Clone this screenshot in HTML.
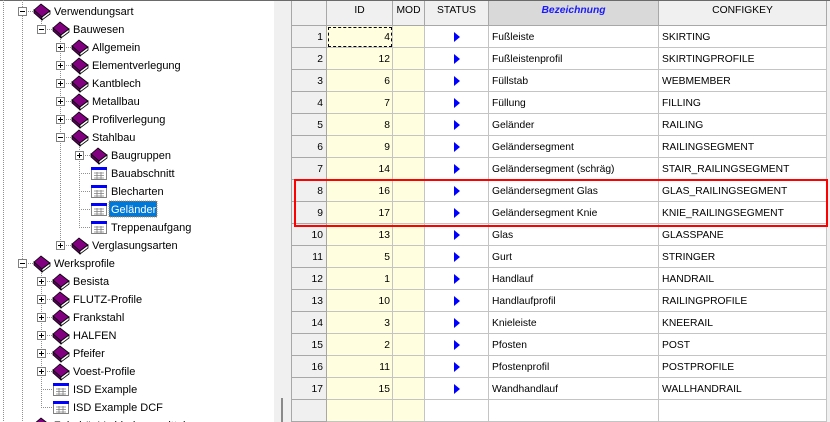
<!DOCTYPE html>
<html><head><meta charset="utf-8"><style>
*{margin:0;padding:0;box-sizing:border-box}
body{width:830px;height:422px;overflow:hidden;background:#fff;position:relative;font-family:"Liberation Sans",Arial,sans-serif}
#top{position:absolute;left:0;top:0;width:830px;height:1px;background:#6a6a6a}
#sb{position:absolute;left:274px;top:1px;width:17px;height:421px;background:#f0f0f0}
#thumb{position:absolute;left:281px;top:398px;width:2px;height:24px;background:#8a8a8a}
#grid{position:absolute;left:291px;top:1px;width:536px;border-collapse:separate;border-spacing:0;table-layout:fixed;font-size:10.3px;color:#000;border-left:1px solid #a8a8a8}
#grid td{border-right:1px solid #c4c4c4;border-bottom:1px solid #c4c4c4;height:22px;padding:1px 3px 0;white-space:nowrap;overflow:hidden}
#grid tr.h td{height:24px;background:#f0f0f0;text-align:center;vertical-align:top;padding-top:4px;border-color:#a8a8a8}
#grid tr.h td.bz{background:#d9d9d9;color:#1a1aff;font-weight:bold;font-style:italic}
#grid td.rh{background:#f0f0f0;text-align:right;padding-right:3px;border-color:#a8a8a8}
#grid td.y{background:#ffffe0;text-align:right;padding-right:2px}
#grid td.st{text-align:center}
.ar{display:inline-block;width:0;height:0;border-left:6px solid #0000ff;border-top:5px solid transparent;border-bottom:5px solid transparent;vertical-align:middle}
#red{position:absolute;left:294px;top:179px;width:534px;height:48px;border:2px solid #f00}
#right{position:absolute;left:827px;top:1px;width:3px;height:421px;background:#f0f0f0}
</style></head><body>
<div id="top"></div>
<svg width="274" height="422" style="position:absolute;left:0;top:0;font-family:'Liberation Sans',Arial,sans-serif;font-size:11px">
<defs>
<g id="bk"><polygon points="1,7 8,1 17,8 9,14" fill="#800080" stroke="#000" stroke-width="0.8"/><polygon points="1,7 9,14 9,17 1,10" fill="#5a005a" stroke="#000" stroke-width="0.8"/><polygon points="9,14 17,8 17,11 9,17" fill="#fff" stroke="#000" stroke-width="0.8"/></g>
<g id="tb"><rect x="0.5" y="0.5" width="15" height="12" fill="#fff" stroke="#808080"/><rect x="0" y="0" width="16" height="3" fill="#0000ff"/><path d="M3 6h10M3 8.5h10M3 11h10M6 5v7M10 5v7" stroke="#808080" stroke-width="0.8"/></g>
<g id="pl"><rect x="0.5" y="0.5" width="8" height="8" fill="#fff" stroke="#808080"/><path d="M2 4.5h5M4.5 2v5" stroke="#000"/></g>
<g id="mi"><rect x="0.5" y="0.5" width="8" height="8" fill="#fff" stroke="#808080"/><path d="M2 4.5h5" stroke="#000"/></g>
</defs>
<g stroke="#909090" stroke-dasharray="1,1" fill="none">
<path d="M3.5 0V422M22.5 0V422M41.5 11V29M41.5 263V407M60.5 29V245M79.5 137V227"/>
<path d="M22 11.5h11M41 29.5h11M60 47.5h11M60 65.5h11M60 83.5h11M60 101.5h11M60 119.5h11M60 137.5h11M79 155.5h11M79 173.5h11M79 191.5h11M79 209.5h11M79 227.5h11M60 245.5h11M22 263.5h11M41 281.5h11M41 299.5h11M41 317.5h11M41 335.5h11M41 353.5h11M41 371.5h11M41 389.5h11M41 407.5h11"/>
</g>
<use href="#mi" x="18" y="7"/><use href="#bk" x="33" y="3"/><text x="54" y="15">Verwendungsart</text>
<use href="#mi" x="37" y="25"/><use href="#bk" x="52" y="21"/><text x="73" y="33">Bauwesen</text>
<use href="#pl" x="56" y="43"/><use href="#bk" x="71" y="39"/><text x="92" y="51">Allgemein</text>
<use href="#pl" x="56" y="61"/><use href="#bk" x="71" y="57"/><text x="92" y="69">Elementverlegung</text>
<use href="#pl" x="56" y="79"/><use href="#bk" x="71" y="75"/><text x="92" y="87">Kantblech</text>
<use href="#pl" x="56" y="97"/><use href="#bk" x="71" y="93"/><text x="92" y="105">Metallbau</text>
<use href="#pl" x="56" y="115"/><use href="#bk" x="71" y="111"/><text x="92" y="123">Profilverlegung</text>
<use href="#mi" x="56" y="133"/><use href="#bk" x="71" y="129"/><text x="92" y="141">Stahlbau</text>
<use href="#pl" x="75" y="151"/><use href="#bk" x="90" y="147"/><text x="111" y="159">Baugruppen</text>
<use href="#tb" x="91" y="167"/><text x="111" y="177">Bauabschnitt</text>
<use href="#tb" x="91" y="185"/><text x="111" y="195">Blecharten</text>
<use href="#tb" x="91" y="203"/><rect x="109" y="201" width="48" height="16" fill="#0078d7" stroke="#e08030" stroke-dasharray="1,1"/><text x="111" y="213" fill="#fff">Geländer</text>
<use href="#tb" x="91" y="221"/><text x="111" y="231">Treppenaufgang</text>
<use href="#pl" x="56" y="241"/><use href="#bk" x="71" y="237"/><text x="92" y="249">Verglasungsarten</text>
<use href="#mi" x="18" y="259"/><use href="#bk" x="33" y="255"/><text x="54" y="267">Werksprofile</text>
<use href="#pl" x="37" y="277"/><use href="#bk" x="52" y="273"/><text x="73" y="285">Besista</text>
<use href="#pl" x="37" y="295"/><use href="#bk" x="52" y="291"/><text x="73" y="303">FLUTZ-Profile</text>
<use href="#pl" x="37" y="313"/><use href="#bk" x="52" y="309"/><text x="73" y="321">Frankstahl</text>
<use href="#pl" x="37" y="331"/><use href="#bk" x="52" y="327"/><text x="73" y="339">HALFEN</text>
<use href="#pl" x="37" y="349"/><use href="#bk" x="52" y="345"/><text x="73" y="357">Pfeifer</text>
<use href="#pl" x="37" y="367"/><use href="#bk" x="52" y="363"/><text x="73" y="375">Voest-Profile</text>
<use href="#tb" x="53" y="383"/><text x="73" y="393">ISD Example</text>
<use href="#tb" x="53" y="401"/><text x="73" y="411">ISD Example DCF</text>
<use href="#bk" x="33" y="417"/><text x="54" y="429">Zubehör Verbindungsmittel</text>
</svg>
<div id="sb"></div><div id="thumb"></div>
<table id="grid">
<colgroup><col style="width:35px"><col style="width:66px"><col style="width:32px"><col style="width:64px"><col style="width:170px"><col style="width:168px"></colgroup>
<tr class="h"><td style="height:25px"></td><td style="height:25px">ID</td><td>MOD</td><td>STATUS</td><td class="bz">Bezeichnung</td><td>CONFIGKEY</td></tr>
<tr><td class="rh">1</td><td class="y" style="outline:1px dashed #000;outline-offset:-2px">4</td><td class="y"></td><td class="st"><span class="ar"></span></td><td>Fußleiste</td><td>SKIRTING</td></tr>
<tr><td class="rh">2</td><td class="y">12</td><td class="y"></td><td class="st"><span class="ar"></span></td><td>Fußleistenprofil</td><td>SKIRTINGPROFILE</td></tr>
<tr><td class="rh">3</td><td class="y">6</td><td class="y"></td><td class="st"><span class="ar"></span></td><td>Füllstab</td><td>WEBMEMBER</td></tr>
<tr><td class="rh">4</td><td class="y">7</td><td class="y"></td><td class="st"><span class="ar"></span></td><td>Füllung</td><td>FILLING</td></tr>
<tr><td class="rh">5</td><td class="y">8</td><td class="y"></td><td class="st"><span class="ar"></span></td><td>Geländer</td><td>RAILING</td></tr>
<tr><td class="rh">6</td><td class="y">9</td><td class="y"></td><td class="st"><span class="ar"></span></td><td>Geländersegment</td><td>RAILINGSEGMENT</td></tr>
<tr><td class="rh">7</td><td class="y">14</td><td class="y"></td><td class="st"><span class="ar"></span></td><td>Geländersegment (schräg)</td><td>STAIR_RAILINGSEGMENT</td></tr>
<tr><td class="rh">8</td><td class="y">16</td><td class="y"></td><td class="st"><span class="ar"></span></td><td>Geländersegment Glas</td><td>GLAS_RAILINGSEGMENT</td></tr>
<tr><td class="rh">9</td><td class="y">17</td><td class="y"></td><td class="st"><span class="ar"></span></td><td>Geländersegment Knie</td><td>KNIE_RAILINGSEGMENT</td></tr>
<tr><td class="rh">10</td><td class="y">13</td><td class="y"></td><td class="st"><span class="ar"></span></td><td>Glas</td><td>GLASSPANE</td></tr>
<tr><td class="rh">11</td><td class="y">5</td><td class="y"></td><td class="st"><span class="ar"></span></td><td>Gurt</td><td>STRINGER</td></tr>
<tr><td class="rh">12</td><td class="y">1</td><td class="y"></td><td class="st"><span class="ar"></span></td><td>Handlauf</td><td>HANDRAIL</td></tr>
<tr><td class="rh">13</td><td class="y">10</td><td class="y"></td><td class="st"><span class="ar"></span></td><td>Handlaufprofil</td><td>RAILINGPROFILE</td></tr>
<tr><td class="rh">14</td><td class="y">3</td><td class="y"></td><td class="st"><span class="ar"></span></td><td>Knieleiste</td><td>KNEERAIL</td></tr>
<tr><td class="rh">15</td><td class="y">2</td><td class="y"></td><td class="st"><span class="ar"></span></td><td>Pfosten</td><td>POST</td></tr>
<tr><td class="rh">16</td><td class="y">11</td><td class="y"></td><td class="st"><span class="ar"></span></td><td>Pfostenprofil</td><td>POSTPROFILE</td></tr>
<tr><td class="rh">17</td><td class="y">15</td><td class="y"></td><td class="st"><span class="ar"></span></td><td>Wandhandlauf</td><td>WALLHANDRAIL</td></tr>
<tr><td class="rh"></td><td class="y"></td><td class="y"></td><td></td><td></td><td></td></tr>
</table>
<div id="right"></div>
<div id="red"></div>
</body></html>
